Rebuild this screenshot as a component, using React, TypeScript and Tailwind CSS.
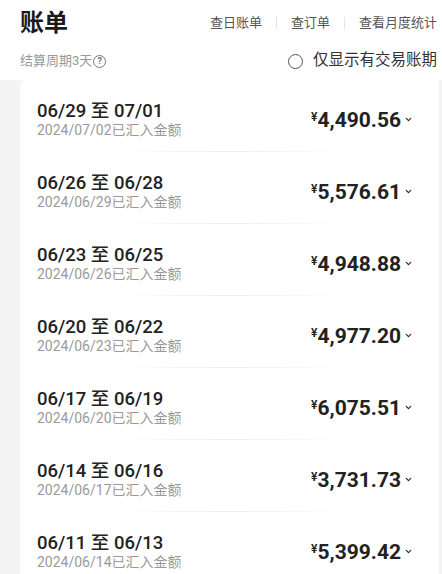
import { ChevronDown } from "lucide-react";

const bills = [
  { range: "06/29 至 07/01", paid: "2024/07/02", amount: "4,490.56" },
  { range: "06/26 至 06/28", paid: "2024/06/29", amount: "5,576.61" },
  { range: "06/23 至 06/25", paid: "2024/06/26", amount: "4,948.88" },
  { range: "06/20 至 06/22", paid: "2024/06/23", amount: "4,977.20" },
  { range: "06/17 至 06/19", paid: "2024/06/20", amount: "6,075.51" },
  { range: "06/14 至 06/16", paid: "2024/06/17", amount: "3,731.73" },
  { range: "06/11 至 06/13", paid: "2024/06/14", amount: "5,399.42" },
];

function BillRow({ range, paid, amount }: { range: string; paid: string; amount: string }) {
  return (
    <li className="flex flex-col">
      <div className="flex h-[71px] items-center justify-between pl-[17px] pr-[26px] pt-[8px]">
        <div className="flex flex-col">
          <span className="text-[18.5px] font-medium leading-[21px] text-[#222]">{range}</span>
          <span className="text-[14px] leading-[16px] text-[#9a9a9a]">{paid}已汇入金额</span>
        </div>
        <div className="flex items-center text-[#222]">
          <span className="self-start pt-[3px] text-[12px] font-semibold leading-none">¥</span>
          <span className="text-[21px] font-bold leading-[24px]">{amount}</span>
          <ChevronDown className="ml-[3px] h-[9px] w-[9px]" strokeWidth={3} />
        </div>
      </div>
      <div className="mx-auto h-px w-[56%] bg-gradient-to-r from-transparent via-[#ededed] to-transparent" />
    </li>
  );
}

export default function App() {
  return (
    <div className="h-[574px] w-[442px] overflow-hidden bg-white font-['Roboto','Noto_Sans_CJK_SC',sans-serif]">
      <header className="pl-5 pr-[5px]">
        <div className="flex h-[46px] items-center justify-between">
          <h1 className="text-[24px] font-bold text-[#1a1a1a]">账单</h1>
          <nav className="flex items-center text-[13px] text-[#555]">
            <a>查日账单</a>
            <span className="mx-[14px] h-[12px] w-px bg-[#e5e5e5]" />
            <a>查订单</a>
            <span className="mx-[14px] h-[12px] w-px bg-[#e5e5e5]" />
            <a>查看月度统计</a>
          </nav>
        </div>
        <div className="flex h-[30px] items-center justify-between">
          <div className="flex items-center text-[13px] text-[#999]">
            结算周期3天
            <span className="ml-[1px] flex h-[13px] w-[13px] items-center justify-center rounded-full border border-[#777] text-[9px] font-bold leading-none text-[#777]">
              ?
            </span>
          </div>
          <label className="flex items-center text-[15.5px] text-[#333]">
            <span className="mr-[10px] h-[15px] w-[15px] rounded-full border-[1.5px] border-[#555]" />
            仅显示有交易账期
          </label>
        </div>
      </header>
      <div className="mt-1 bg-[#f4f4f4] pl-5 pr-[3px]">
        <ul className="rounded-tl-md bg-white">
          {bills.map((b) => (
            <BillRow key={b.range} {...b} />
          ))}
        </ul>
      </div>
    </div>
  );
}
